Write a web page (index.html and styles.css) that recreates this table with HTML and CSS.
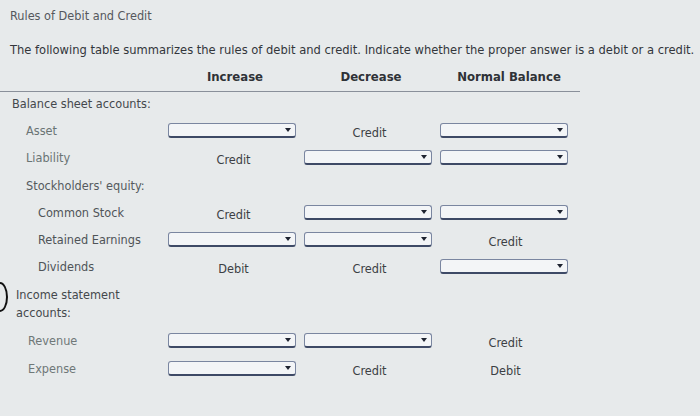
FILE: index.html
```html
<!DOCTYPE html>
<html>
<head>
<meta charset="utf-8">
<link rel="stylesheet" href="styles.css">
</head>
<body>
<div class="page">
  <div class="title">Rules of Debit and Credit</div>
  <div class="intro">The following table summarizes the rules of debit and credit. Indicate whether the proper answer is a debit or a credit.</div>
  <div class="table">
    <div class="head">
      <div></div>
      <div class="th">Increase</div>
      <div class="th">Decrease</div>
      <div class="th">Normal Balance</div>
    </div>
    <div class="row section"><div class="lbl l0">Balance sheet accounts:</div></div>
    <div class="row">
      <div class="lbl l1">Asset</div>
      <div class="cell"><span class="dd"></span></div>
      <div class="cell txt">Credit</div>
      <div class="cell"><span class="dd"></span></div>
    </div>
    <div class="row">
      <div class="lbl l1">Liability</div>
      <div class="cell txt">Credit</div>
      <div class="cell"><span class="dd"></span></div>
      <div class="cell"><span class="dd"></span></div>
    </div>
    <div class="row section"><div class="lbl l1 dark">Stockholders' equity:</div></div>
    <div class="row">
      <div class="lbl l2">Common Stock</div>
      <div class="cell txt">Credit</div>
      <div class="cell"><span class="dd"></span></div>
      <div class="cell"><span class="dd"></span></div>
    </div>
    <div class="row">
      <div class="lbl l2">Retained Earnings</div>
      <div class="cell"><span class="dd"></span></div>
      <div class="cell"><span class="dd"></span></div>
      <div class="cell txt">Credit</div>
    </div>
    <div class="row">
      <div class="lbl l2">Dividends</div>
      <div class="cell txt">Debit</div>
      <div class="cell txt">Credit</div>
      <div class="cell"><span class="dd"></span></div>
    </div>
    <div class="row income"><div class="lbl l0b">Income statement<br>accounts:</div></div>
    <div class="row">
      <div class="lbl l1b">Revenue</div>
      <div class="cell"><span class="dd"></span></div>
      <div class="cell"><span class="dd"></span></div>
      <div class="cell txt">Credit</div>
    </div>
    <div class="row">
      <div class="lbl l1b">Expense</div>
      <div class="cell"><span class="dd"></span></div>
      <div class="cell txt">Credit</div>
      <div class="cell txt">Debit</div>
    </div>
  </div>
  <div class="bracket"></div>
</div>
</body>
</html>
```
FILE: styles.css
```css
html, body {
  margin: 0;
  padding: 0;
}
body {
  background: #e7eaeb;
  font-family: "DejaVu Sans", Verdana, sans-serif;
  font-stretch: condensed;
  color: #3a3d42;
  width: 700px;
  height: 416px;
  overflow: hidden;
}
.page {
  position: relative;
  padding: 8px 0 0 0;
}
.title {
  padding-left: 10px;
  font-size: 12.6px;
  color: #55585d;
  line-height: 16px;
}
.intro {
  padding-left: 10px;
  margin-top: 18px;
  font-size: 12.8px;
  line-height: 16px;
  color: #33363b;
  white-space: nowrap;
}
.table {
  margin-top: 3px;
}
.head {
  display: grid;
  grid-template-columns: 160px 128px 128px 128px;
  column-gap: 8px;
  width: 580px;
  border-bottom: 1px solid #8a909a;
  height: 30px;
  align-items: center;
}
.th {
  font-weight: bold;
  font-size: 13px;
  text-align: center;
  color: #2f3237;
}
.th:nth-child(2) { padding-left: 6px; }
.th:nth-child(3) { padding-left: 6px; }
.th:nth-child(4) { padding-left: 10px; }
.row {
  display: grid;
  grid-template-columns: 160px 128px 128px 128px;
  column-gap: 8px;
  height: 27.2px;
  align-items: center;
  font-size: 12.6px;
}
.row:nth-child(2) {
  margin-top: -2px;
}
.row.income {
  height: 47px;
}
.lbl {
  color: #555a5e;
  white-space: nowrap;
}
.l0 { padding-left: 12px; color: #44484c; }
.l0b { padding-left: 16px; color: #44484c; line-height: 18px; }
.l1 { padding-left: 26px; color: #6a7474; }
.l1.dark { color: #555a5e; }
.l1b { padding-left: 28px; color: #6f7878; }
.l2 { padding-left: 38px; color: #4f5458; }
.cell {
  display: flex;
  justify-content: center;
}
.txt {
  color: #3c3f44;
  padding-top: 4px;
  padding-left: 3px;
}
.dd {
  position: relative;
  display: block;
  box-sizing: border-box;
  width: 128px;
  height: 15px;
  background: #f3f5f7;
  border: 1px solid #7a86a0;
  border-bottom: 2px solid #3e4a66;
  border-radius: 3px;
}
.dd::after {
  content: "";
  position: absolute;
  right: 4px;
  top: 4px;
  border-left: 3px solid transparent;
  border-right: 3px solid transparent;
  border-top: 4px solid #1e2330;
}
.bracket {
  position: absolute;
  left: -8px;
  top: 282px;
  width: 12px;
  height: 26px;
  border: 2px solid #111;
  border-radius: 50%;
}
```
